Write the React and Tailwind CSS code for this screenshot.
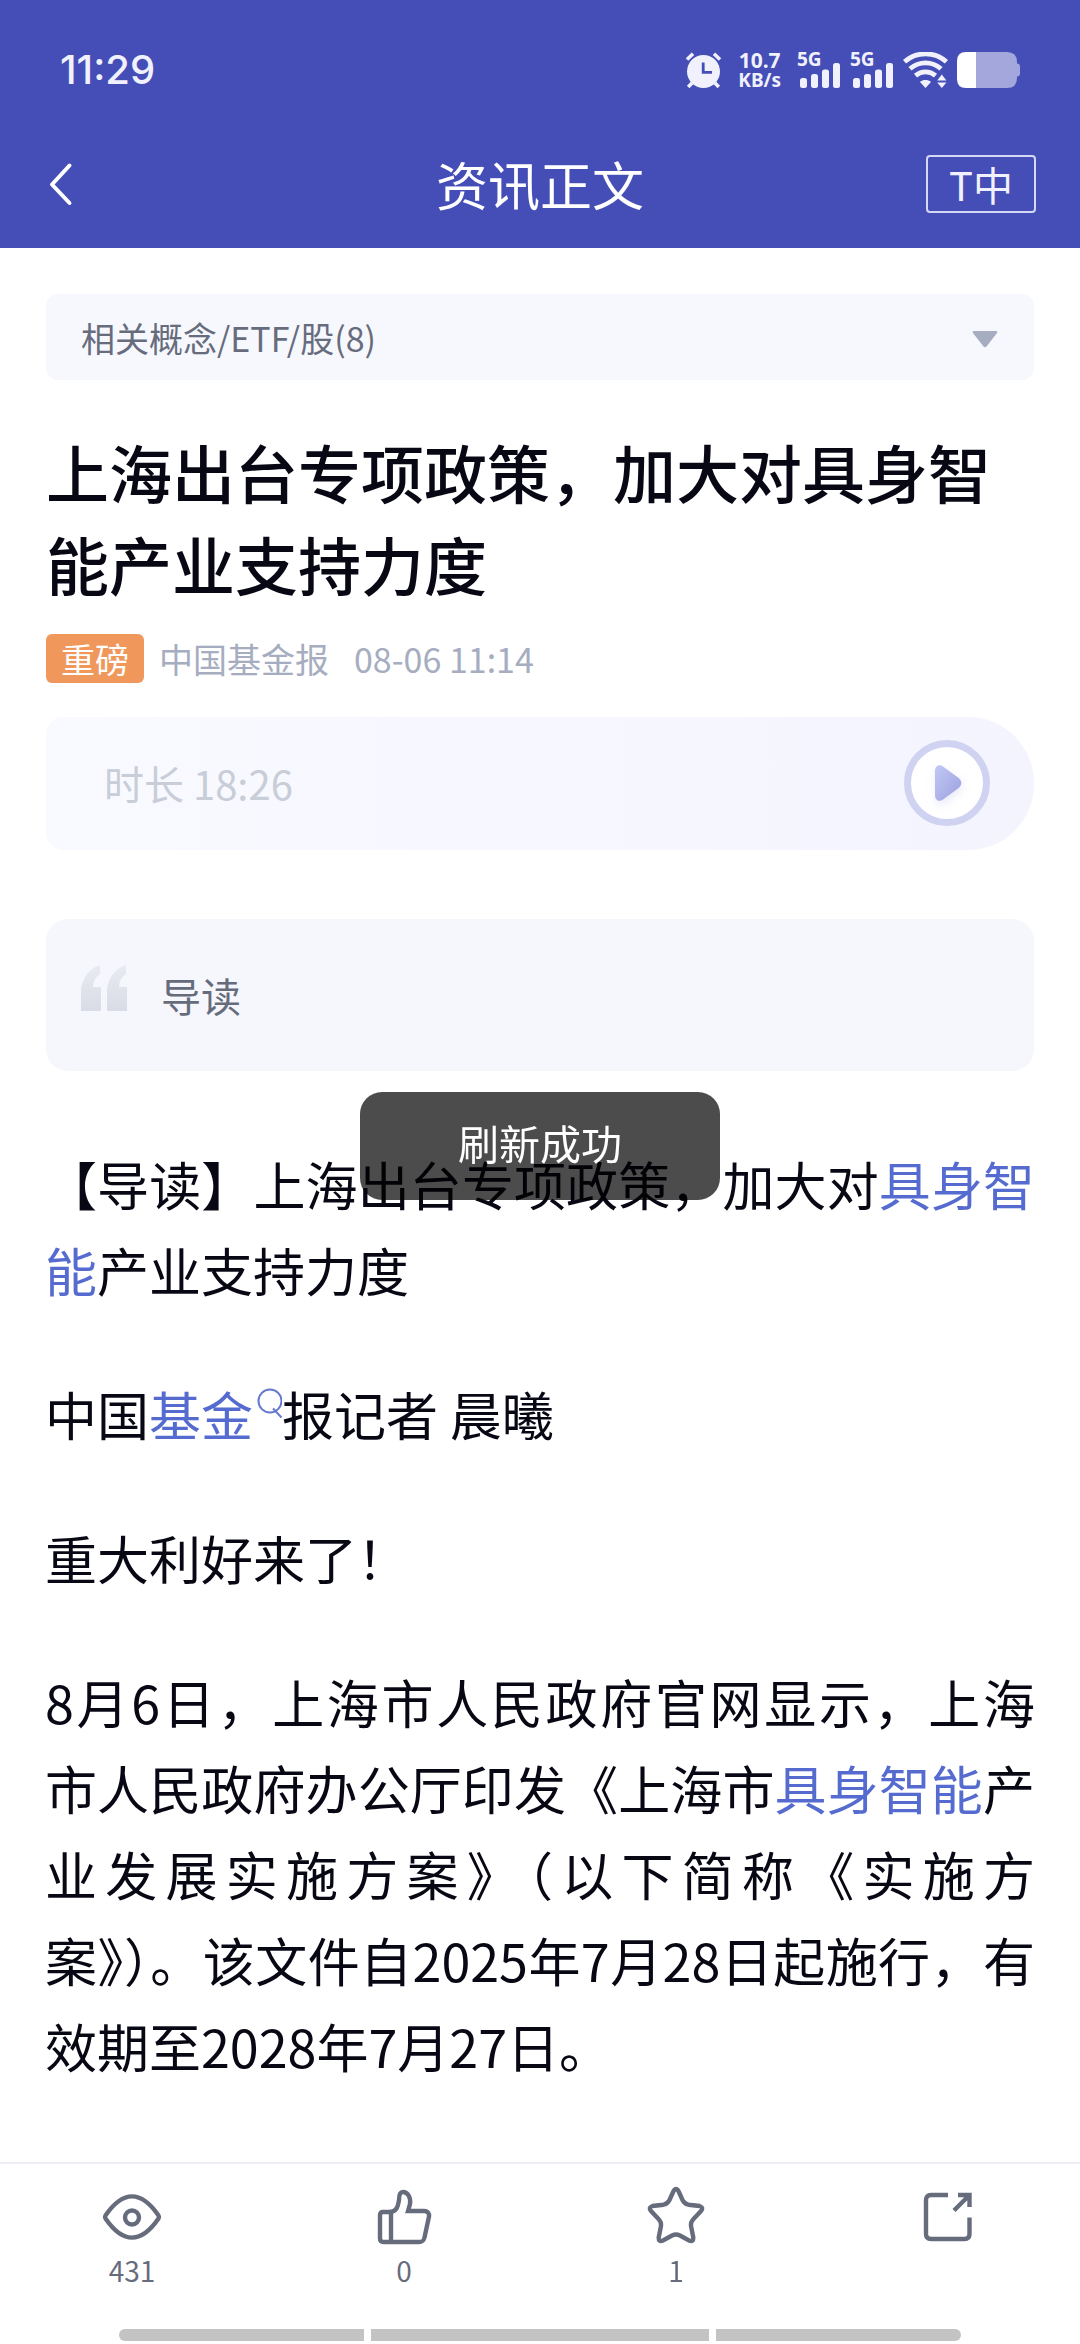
import React, { useState } from 'react';

const AlarmIcon = () => (
  <svg viewBox="0 0 37 36" className="w-[37px] h-9" fill="none">
    <circle cx="18.5" cy="19.5" r="16.5" fill="#f0f1fc" />
    <path d="M2 7.5 8 1.8M35 7.5 29 1.8" stroke="#f0f1fc" strokeWidth="3.6" />
    <path d="M7 31 3.2 35M30 31 33.8 35" stroke="#f0f1fc" strokeWidth="3.6" />
    <path d="M18.2 10.5V20.3H27" stroke="#454eb6" strokeWidth="2.8" />
  </svg>
);

const SignalIcon = () => (
  <div className="flex flex-col w-[43px] h-9">
    <span className="h-[11px] text-[19px] leading-[15px] font-bold">5G</span>
    <svg viewBox="0 0 43 25" className="w-[43px] h-[25px]" fill="#f0f1fc">
      <rect x="3" y="15" width="7" height="10" rx="2.5" />
      <rect x="14" y="11" width="7" height="14" rx="2.5" />
      <rect x="25" y="6.5" width="7" height="18.5" rx="2.5" />
      <rect x="36" y="0" width="7" height="25" rx="2.5" />
    </svg>
  </div>
);

const WifiIcon = () => (
  <svg viewBox="0 0 45 36" className="w-[45px] h-9" fill="none" stroke="#f0f1fc" strokeWidth="4.8">
    <path d="M1.5 9.8C13.5-.8 31.5-.8 43.5 9.8" />
    <path d="M7 16.8C16 8.8 29 8.8 38 16.8" />
    <path d="M12.5 23.6C18.5 18.6 26.5 18.6 32.5 23.6" />
    <path d="M17 30C20 27.4 25 27.4 28 30L22.5 36Z" fill="#f0f1fc" stroke="none" />
    <path d="M34.2 28.6 38.8 22.4 43.4 28.6ZM34.2 30.6H43.4L38.8 36Z" fill="#f0f1fc" stroke="none" />
  </svg>
);

const BatteryIcon = () => (
  <svg viewBox="0 0 63 36" className="w-[63px] h-9">
    <path d="M9 0H50Q60 0 60 10V11.5Q63 11.5 63 14.5V21.5Q63 24.5 60 24.5V26Q60 36 50 36H9Z" fill="#a3a7dc" />
    <path d="M19 0H9Q0 0 0 9V27Q0 36 9 36H19Z" fill="#fff" />
  </svg>
);

const StatusBar = () => (
  <div className="flex items-center justify-between h-[120px] pt-5 px-[60px] text-[#f0f1fc]">
    <span className="text-[40px] leading-[42px] font-medium font-['Inter',sans-serif]">11:29</span>
    <div className="flex items-center font-['Noto_Sans','Noto_Sans_CJK_SC',sans-serif]">
      <AlarmIcon />
      <div className="ml-4 text-[21px] leading-[20px] font-bold text-center">
        <div>10.7</div>
        <div className="text-[19px]">KB/s</div>
      </div>
      <div className="flex gap-[10px] ml-4">
        <SignalIcon />
        <SignalIcon />
      </div>
      <div className="flex gap-[9px] ml-[10px]">
        <WifiIcon />
        <BatteryIcon />
      </div>
    </div>
  </div>
);

const NavBar = () => (
  <div className="grid grid-cols-3 items-center h-32 px-11">
    <button aria-label="返回" className="justify-self-start">
      <svg viewBox="0 0 30 44" className="w-[30px] h-11" fill="none" stroke="#fff" strokeWidth="4" strokeLinecap="round" strokeLinejoin="round">
        <path d="M25.5 3.5 8 22.5 25.5 41" />
      </svg>
    </button>
    <h1 className="text-[52px] leading-[60px] text-white text-center">资讯正文</h1>
    <button className="justify-self-end w-[110px] h-[58px] border-2 border-[#d5d8f5] rounded-[4px] text-[40px] leading-[52px] text-[#f0f1fc]">
      T中
    </button>
  </div>
);

const PlayIcon = () => (
  <svg viewBox="0 0 86 86" className="w-[86px] h-[86px]">
    <defs>
      <linearGradient id="playFill" x1="0" y1="0" x2="1" y2="1">
        <stop offset="0" stopColor="#c2c9f5" />
        <stop offset="1" stopColor="#9c9fdf" />
      </linearGradient>
      <filter id="playShadow" x="-50%" y="-50%" width="200%" height="200%">
        <feDropShadow dx="1" dy="4" stdDeviation="4" floodColor="#a9aeea" floodOpacity="0.25" />
      </filter>
    </defs>
    <circle cx="43" cy="43" r="39.5" fill="#fff" stroke="#d0d2f2" strokeWidth="7" />
    <path d="M31 31C31 26 35 23.5 39 26.5L54 37.5C58.5 41 58.5 45 54 48.5L39 59.5C35 62.5 31 60 31 55Z" fill="url(#playFill)" filter="url(#playShadow)" />
  </svg>
);

const QuoteIcon = () => (
  <svg viewBox="0 0 46 46" className="w-[46px] h-[46px]">
    <defs>
      <linearGradient id="quoteFill" x1="0" y1="0" x2="0" y2="1">
        <stop offset="0" stopColor="#e9ebf2" />
        <stop offset="1" stopColor="#d9dce6" />
      </linearGradient>
    </defs>
    <path d="M0 46V23Q4 5 19 0V9Q12 14 12 22H20V46ZM26 46V23Q30 5 45 0V9Q38 14 38 22H46V46Z" fill="url(#quoteFill)" />
  </svg>
);

const Keyword = ({ children }) => (
  <a href="#" className="text-[#566bd0]">{children}</a>
);

const SearchMark = () => (
  <svg viewBox="0 0 29 30" className="inline-block align-baseline w-[29px] h-12 pb-[18px]" fill="none" stroke="#6478d0" strokeWidth="2">
    <circle cx="17" cy="13" r="11.5" />
    <path d="M20 20.5 28.5 29.5" />
  </svg>
);

const icons = {
  views: (
    <>
      <path d="M3.5 29.5Q2.5 28 3.5 26.5C21 1 39 1 56.5 26.5Q57.5 28 56.5 29.5C39 55 21 55 3.5 29.5Z" />
      <circle cx="30" cy="28.5" r="7" />
    </>
  ),
  likes: (
    <>
      <path d="M9 23H15C23 23 24 17 25 11C25 5 26.5 3 29 3C34 3 37 9 36 15L34 22H50C53.5 22 55.5 24 55 27.5L50.5 48.5C49.5 52 48.5 53 45 53H9.5Q6 53 6 49.5V26.5Q6 23 9 23Z" />
      <path d="M17 53V23" />
    </>
  ),
  stars: (
    <path d="M27.3 2.5Q30 -2.5 32.7 2.5L36.5 11Q38.5 15 42.5 15.7L53.5 17Q58 18.5 55 22L47.5 30Q44.5 33 45 37L47.3 48.5Q47.5 53.5 43 51.5L34 46.5Q30 44.5 26 46.5L17 51.5Q12.5 53.5 12.7 48.5L15 37Q15.5 33 12.5 30L5 22Q2 18.5 6.5 17L17.5 15.7Q21.5 15 23.5 11Z" />
  ),
  share: (
    <>
      <path d="M30 6H13Q8 6 8 11V45Q8 50 13 50H46.5Q51.5 50 51.5 45V28.5" />
      <path d="M40 6H51.5V18M51 6.5 36 21.5" />
    </>
  ),
};

const actions = [
  { key: 'views', label: '阅读', count: 431 },
  { key: 'likes', label: '点赞', count: 0 },
  { key: 'stars', label: '收藏', count: 1 },
  { key: 'share', label: '分享', count: null },
];

const BottomBar = () => (
  <footer className="sticky bottom-0 bg-white border-t-2 border-[#ededf3]">
    <div className="grid grid-cols-4 h-[165px] -mx-1 pt-[25px]">
      {actions.map(({ key, label, count }) => (
        <button key={key} aria-label={label} className="flex flex-col items-center text-[28px] leading-[42px] text-[#676c7d]">
          <svg viewBox="0 0 60 60" className="w-[60px] h-[60px] overflow-visible" fill="none" stroke="currentColor" strokeWidth="4.4">
            {icons[key]}
          </svg>
          {count}
        </button>
      ))}
    </div>
    <div className="flex justify-center gap-[7px] pb-[3px]">
      <span className="w-[245px] h-3 bg-[#c3c3c3] rounded-l-full" />
      <span className="w-[338px] h-3 bg-[#c3c3c3]" />
      <span className="w-[245px] h-3 bg-[#c3c3c3] rounded-r-full" />
    </div>
  </footer>
);

const App = () => {
  const [open, setOpen] = useState(false);

  return (
    <div className="flex flex-col min-h-screen bg-white text-[#080815] font-['Noto_Sans_CJK_SC',sans-serif]" lang="zh-CN">
      <header className="bg-[#454eb6]">
        <StatusBar />
        <NavBar />
      </header>

      <main className="flex-1 px-[46px] pt-[46px]">
        <button
          onClick={() => setOpen(!open)}
          aria-expanded={open}
          className="flex items-center justify-between w-full h-[86px] pl-[35px] pr-9 rounded-xl bg-[#f6f8fd] text-[34px] text-[#676c7d]"
        >
          相关概念/ETF/股(8)
          <svg viewBox="0 0 26 18" className="w-[26px] h-[18px] mt-1" fill="#a6adc0">
            <path d="M2 1H24Q26 1 25 3L14.5 16.5Q13 18 11.5 16.5L1 3Q0 1 2 1Z" />
          </svg>
        </button>

        <h2 className="mt-[45px] text-[63px] leading-[92px] font-medium">
          上海出台专项政策，加大对具身智能产业支持力度
        </h2>

        <div className="flex items-center mt-[25px] text-[34px] leading-[49px] text-[#a6adc0]">
          <span className="px-[15px] rounded-[6px] bg-[#f0985c] text-white">重磅</span>
          <span className="ml-[15px]">中国基金报</span>
          <span className="ml-[25px]">08-06 11:14</span>
        </div>

        <div className="flex items-center justify-between h-[133px] mt-[34px] pl-[58px] pr-11 pb-[2px] rounded-l-[18px] rounded-r-[66px] bg-linear-to-r from-[#f9faff] to-[#f4f4ff]">
          <span className="text-[40px] text-[#c8cdd8]">时长 18:26</span>
          <button aria-label="播放">
            <PlayIcon />
          </button>
        </div>

        <div className="flex items-start gap-[34px] h-[152px] mt-[69px] px-[35px] pt-[46px] rounded-[22px] bg-[#f6f7fc]">
          <QuoteIcon />
          <p className="text-[40px] leading-[60px] text-[#676c7d]">导读</p>
        </div>

        <article className="flex flex-col gap-[58px] -mx-px mt-[70px] pb-16 text-[52px] leading-[86px] text-justify">
          <p>
            【导读】上海出台专项政策，加大对<Keyword>具身智能</Keyword>产业支持力度
          </p>
          <p>
            中国<Keyword>基金<SearchMark /></Keyword>报记者 晨曦
          </p>
          <p>重大利好来了！</p>
          <p>
            8月6日，上海市人民政府官网显示，上海市人民政府办公厅印发《上海市<Keyword>具身智能</Keyword>产业发展实施方案》（以下简称《实施方案》）。该文件自2025年7月28日起施行，有效期至2028年7月27日。
          </p>
        </article>
      </main>

      <BottomBar />

      <div role="status" className="fixed inset-x-0 top-[1092px] flex items-center justify-center w-1/3 h-[108px] mx-auto pb-[6px] rounded-[22px] bg-black/70 text-[41px] text-white">
        刷新成功
      </div>
    </div>
  );
};

export default App;
